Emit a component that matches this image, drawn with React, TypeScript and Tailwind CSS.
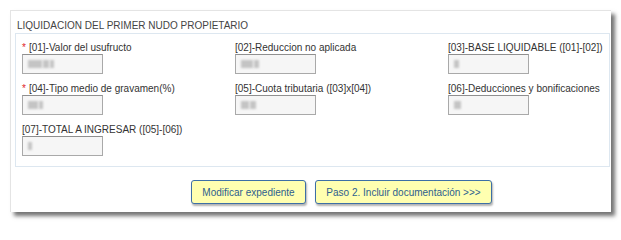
const fields = [
  { label: "[01]-Valor del usufructo", required: true, blur: [14, 6, 4] },
  { label: "[02]-Reduccion no aplicada", required: false, blur: [12, 5] },
  { label: "[03]-BASE LIQUIDABLE ([01]-[02])", required: false, blur: [5] },
  { label: "[04]-Tipo medio de gravamen(%)", required: true, blur: [10, 4] },
  { label: "[05]-Cuota tributaria ([03]x[04])", required: false, blur: [8, 6] },
  { label: "[06]-Deducciones y bonificaciones", required: false, blur: [7] },
  { label: "[07]-TOTAL A INGRESAR ([05]-[06])", required: false, blur: [4] },
]

function Field({ label, required, blur }: { label: string; required: boolean; blur: number[] }) {
  return (
    <div className="flex flex-col">
      <div className="text-[10px] leading-[13px] text-[#333] whitespace-nowrap">
        {required && <span className="text-[#e0262b] mr-[3px]">*</span>}
        {label}
      </div>
      <div className="flex h-[20px] w-[81px] items-center gap-[1px] border border-[#a9a9a9] border-t-[#8f8f8f] bg-[#f6f6f6] pl-[5px]">
        {blur.map((w, i) => (
          <div key={i} className="h-[8px] bg-[#c4c4c4] blur-[1px]" style={{ width: w }} />
        ))}
      </div>
    </div>
  )
}

export default function App() {
  return (
    <div className="h-[223px] w-[621px] bg-white pl-[10px] pt-[10px] font-['Liberation_Sans',Arial,sans-serif]">
      <div className="h-[202px] w-[601px] border-l border-t border-[#e4e4e4] bg-white pl-[4px] pt-[7px] shadow-[4px_4px_4px_rgba(0,0,0,0.55)]">
        <div className="text-[10px] leading-[15px] text-[#444] pl-[2px]">LIQUIDACION DEL PRIMER NUDO PROPIETARIO</div>
        <div className="mr-[1px] border border-[#dde7f0] pl-[6px] pt-[7px] pb-[10px]">
          <div className="grid grid-cols-[213px_213px_auto] gap-y-[8px]">
            {fields.map((f) => (
              <Field key={f.label} {...f} />
            ))}
          </div>
        </div>
        <div className="mt-[13px] flex gap-[9px] pl-[176px]">
          <button className="h-[24px] w-[115px] rounded-[3px] border border-[#3d6fa6] bg-[#ffffb0] text-[10px] text-[#2d5e8e] shadow-[1px_2px_2px_rgba(0,0,0,0.3)]">
            Modificar expediente
          </button>
          <button className="h-[24px] w-[177px] rounded-[3px] border border-[#3d6fa6] bg-[#ffffb0] text-[10px] text-[#2d5e8e] shadow-[1px_2px_2px_rgba(0,0,0,0.3)]">
            Paso 2. Incluir documentación &gt;&gt;&gt;
          </button>
        </div>
      </div>
    </div>
  )
}
